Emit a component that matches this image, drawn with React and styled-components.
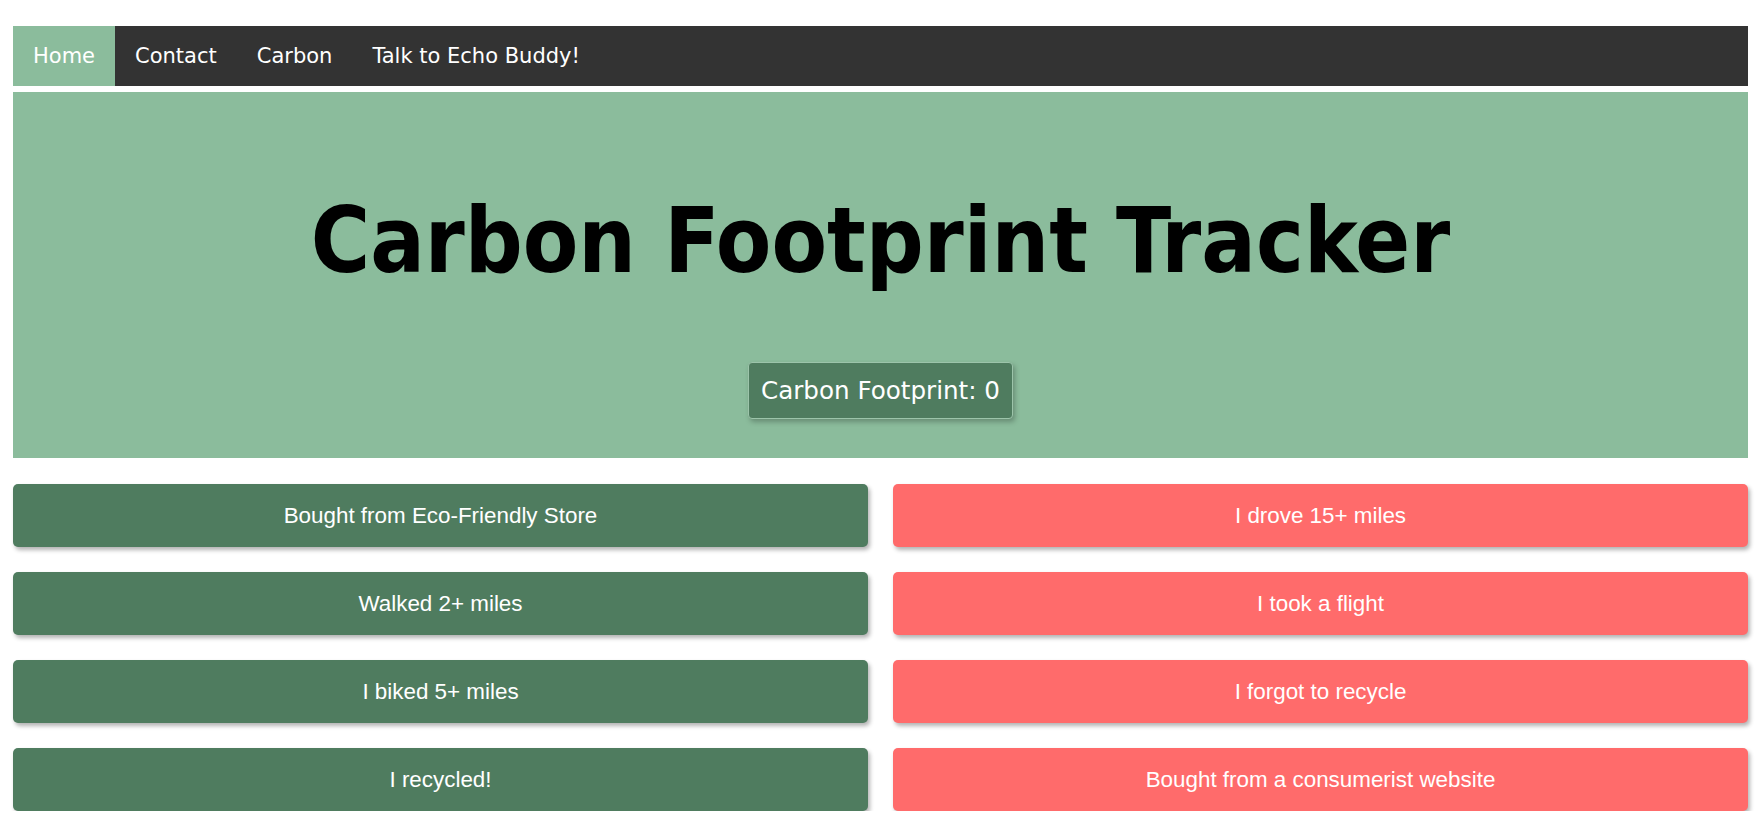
import React from "react";
import styled, { createGlobalStyle } from "styled-components";

const Global = createGlobalStyle`
  html, body { margin: 0; padding: 0; background: #ffffff; }
  body { font-family: "DejaVu Sans", Verdana, sans-serif; }
  * { box-sizing: border-box; }
`;

const Page = styled.div`
  padding: 26px 12px 0 13px;
`;

const Nav = styled.nav`
  display: flex;
  height: 60px;
  background: #333333;
`;

const NavItem = styled.a`
  display: flex;
  align-items: center;
  padding: 0 20px;
  font-size: 21px;
  color: #ffffff;
  text-decoration: none;
  background: ${(p) => (p.$active ? "#8bbc9c" : "transparent")};
`;

const Hero = styled.header`
  margin-top: 6px;
  background: #8bbc9c;
  display: flex;
  flex-direction: column;
  align-items: center;
  padding: 104px 0 39px 0;
`;

const Title = styled.h1`
  margin: 0;
  font-family: "DejaVu Sans Condensed", "DejaVu Sans", Verdana, sans-serif;
  font-stretch: condensed;
  font-weight: bold;
  font-size: 90px;
  line-height: 1;
  color: #000000;
`;

const Counter = styled.div`
  margin-top: 76px;
  background: #4f7c5f;
  color: #ffffff;
  font-size: 24.6px;
  line-height: 29px;
  padding: 13px 12px 13px 12px;
  border: 1px solid #9cc4aa;
  border-radius: 4px;
  box-shadow: 2px 3px 5px rgba(0, 0, 0, 0.25);
`;

const Grid = styled.div`
  display: grid;
  grid-template-columns: 1fr 1fr;
  column-gap: 25px;
  row-gap: 25px;
  margin-top: 26px;
`;

const ActionButton = styled.button`
  height: 63px;
  border: none;
  border-radius: 5px;
  background: ${(p) => (p.$bad ? "#ff6b6b" : "#4f7c5f")};
  color: #ffffff;
  font-family: "Liberation Sans", Arial, sans-serif;
  font-size: 22.4px;
  box-shadow: 2px 3px 4px rgba(0, 0, 0, 0.3);
  cursor: pointer;
`;

const rows = [
  ["Bought from Eco-Friendly Store", "I drove 15+ miles"],
  ["Walked 2+ miles", "I took a flight"],
  ["I biked 5+ miles", "I forgot to recycle"],
  ["I recycled!", "Bought from a consumerist website"],
];

export default function App() {
  return (
    <Page>
      <Global />
      <Nav>
        <NavItem $active href="#">Home</NavItem>
        <NavItem href="#">Contact</NavItem>
        <NavItem href="#">Carbon</NavItem>
        <NavItem href="#">Talk to Echo Buddy!</NavItem>
      </Nav>
      <Hero>
        <Title>Carbon Footprint Tracker</Title>
        <Counter>Carbon Footprint: 0</Counter>
      </Hero>
      <Grid>
        {rows.map(([good, bad]) => (
          <React.Fragment key={good}>
            <ActionButton>{good}</ActionButton>
            <ActionButton $bad>{bad}</ActionButton>
          </React.Fragment>
        ))}
      </Grid>
    </Page>
  );
}
